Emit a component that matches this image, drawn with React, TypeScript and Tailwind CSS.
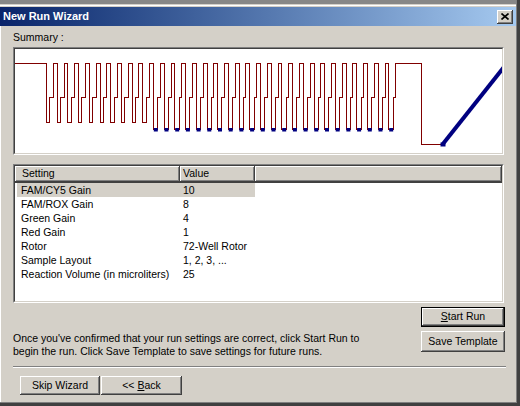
const rows: [string, string][] = [
  ['FAM/CY5 Gain', '10'],
  ['FAM/ROX Gain', '8'],
  ['Green Gain', '4'],
  ['Red Gain', '1'],
  ['Rotor', '72-Well Rotor'],
  ['Sample Layout', '1, 2, 3, ...'],
  ['Reaction Volume (in microliters)', '25'],
];

const raised =
  'bg-[#d4d0c8] shadow-[inset_-1px_-1px_0_#404040,inset_1px_1px_0_#ffffff,inset_-2px_-2px_0_#808080,inset_2px_2px_0_#d4d0c8]';

function RunChart() {
  // thermal profile: 33 cycles, the last 23 with acquisition points
  const period = 10.7;
  let d = 'M15 63.5 H46.5';
  const dots: number[] = [];
  for (let i = 0; i < 33; i++) {
    const x = 46.5 + i * period;
    const low = i < 10 ? 122.5 : 129.5;
    const lowEnd = i < 10 ? x + 3.3 : x + 4.2;
    d += ` V${low} H${lowEnd.toFixed(1)} V97.5 H${(x + 6.8).toFixed(1)} V63.5`;
    if (i < 32) d += ` H${(x + period).toFixed(1)}`;
    if (i >= 10) dots.push(x);
  }
  d += ' H421.5 V144.5 H442.5';

  return (
    <svg width={487} height={104} viewBox="15 49 487 104" className="block">
      <path d={d} fill="none" stroke="#800000" strokeWidth={1} shapeRendering="crispEdges" />
      {dots.map((x) => (
        <rect key={x} x={x + 0.3} y={128} width={4} height={3.5} fill="#000080" />
      ))}
      <line x1={442.5} y1={144.5} x2={512} y2={57} stroke="#000080" strokeWidth={4} />
      <rect x={440.5} y={142.5} width={5} height={4} fill="#000080" />
    </svg>
  );
}

function Sunken({ className, children }: { className: string; children: React.ReactNode }) {
  return (
    <div className={`border border-t-[#808080] border-l-[#808080] border-b-white border-r-white ${className}`}>
      <div className="h-full border border-t-[#404040] border-l-[#404040] border-b-[#d4d0c8] border-r-[#d4d0c8] bg-white overflow-hidden">
        {children}
      </div>
    </div>
  );
}

export default function App() {
  return (
    <div className="w-[520px] h-[406px] bg-[#404040] font-['Liberation_Sans',Arial,sans-serif] text-[10.5px] text-black overflow-hidden">
      <div className="w-[517px] h-[403px] flex flex-col bg-[#d4d0c8] border-r border-b border-[#808080]">
        {/* frame top */}
        <div className="h-[4px] bg-[#878787]" />
        <div className="h-[1px] bg-[#d4d0c8]" />
        <div className="h-[1px] bg-white" />
        <div className="h-[1px] bg-[#d4d0c8]" />

        {/* title bar */}
        <div className="h-[19px] flex items-center justify-between pl-[3px] pr-[3px] bg-gradient-to-r from-[#0a246a] to-[#a6caf0]">
          <span className="text-white font-bold text-[11px] leading-none">New Run Wizard</span>
          <div className={`w-[16px] h-[14px] flex items-center justify-center ${raised}`}>
            <svg width="8" height="7" viewBox="0 0 8 7">
              <path d="M0.5 0.5 L7.5 6.5 M7.5 0.5 L0.5 6.5" stroke="#000" strokeWidth="1.6" />
            </svg>
          </div>
        </div>

        {/* body */}
        <div className="flex-1 flex flex-col pl-[13px] border-l border-white">
          <div className="mt-[5px] h-[13px] leading-[13px] -ml-[1px]">Summary :</div>

          <Sunken className="mt-[3px] w-[491px] h-[108px] -ml-[1px]">
            <RunChart />
          </Sunken>

          <Sunken className="mt-[9px] w-[491px] h-[139px] -ml-[1px]">
            <div className="flex h-[17px] leading-[15px] border-b border-[#404040]">
              <div className={`w-[165px] pl-[7px] ${raised}`}>Setting</div>
              <div className={`w-[75px] pl-[3px] ${raised}`}>Value</div>
              <div className={`flex-1 ${raised}`} />
            </div>
            <div className="pl-[2px]">
              {rows.map(([name, value], i) => (
                <div
                  key={name}
                  className={`flex w-[238px] h-[14px] leading-[14px] ${i === 0 ? 'bg-[#d4d0c8]' : ''}`}
                >
                  <div className="w-[163px] pl-[4px] whitespace-nowrap">{name}</div>
                  <div className="w-[75px] pl-[3px] whitespace-nowrap">{value}</div>
                </div>
              ))}
            </div>
          </Sunken>

          <div className="h-[63px] flex -ml-[1px]">
            <div className="w-[408px] mt-[29px] leading-[12.5px] whitespace-nowrap">
              Once you've confirmed that your run settings are correct, click Start Run to
              <br />
              begin the run. Click Save Template to save settings for future runs.
            </div>
            <div className="flex flex-col pt-[4px] gap-[4px]">
              <div className="w-[84px] h-[20px] border border-black">
                <div className={`h-full flex items-center justify-center ${raised}`}>
                  <span>
                    <span className="underline">S</span>tart Run
                  </span>
                </div>
              </div>
              <div className={`w-[84px] h-[21px] flex items-center justify-center ${raised}`}>
                Save Template
              </div>
            </div>
          </div>

          <div className="w-[493px] h-[2px] border-t border-t-[#808080] border-b border-b-white -ml-[1px]" />

          <div className="mt-[8px] ml-[6px] flex">
            <div className={`w-[80px] h-[19px] flex items-center justify-center ${raised}`}>Skip Wizard</div>
            <div className={`w-[81px] h-[19px] ml-[1px] flex items-center justify-center ${raised}`}>
              <span>
                &lt;&lt; <span className="underline">B</span>ack
              </span>
            </div>
          </div>
        </div>
      </div>
    </div>
  );
}
